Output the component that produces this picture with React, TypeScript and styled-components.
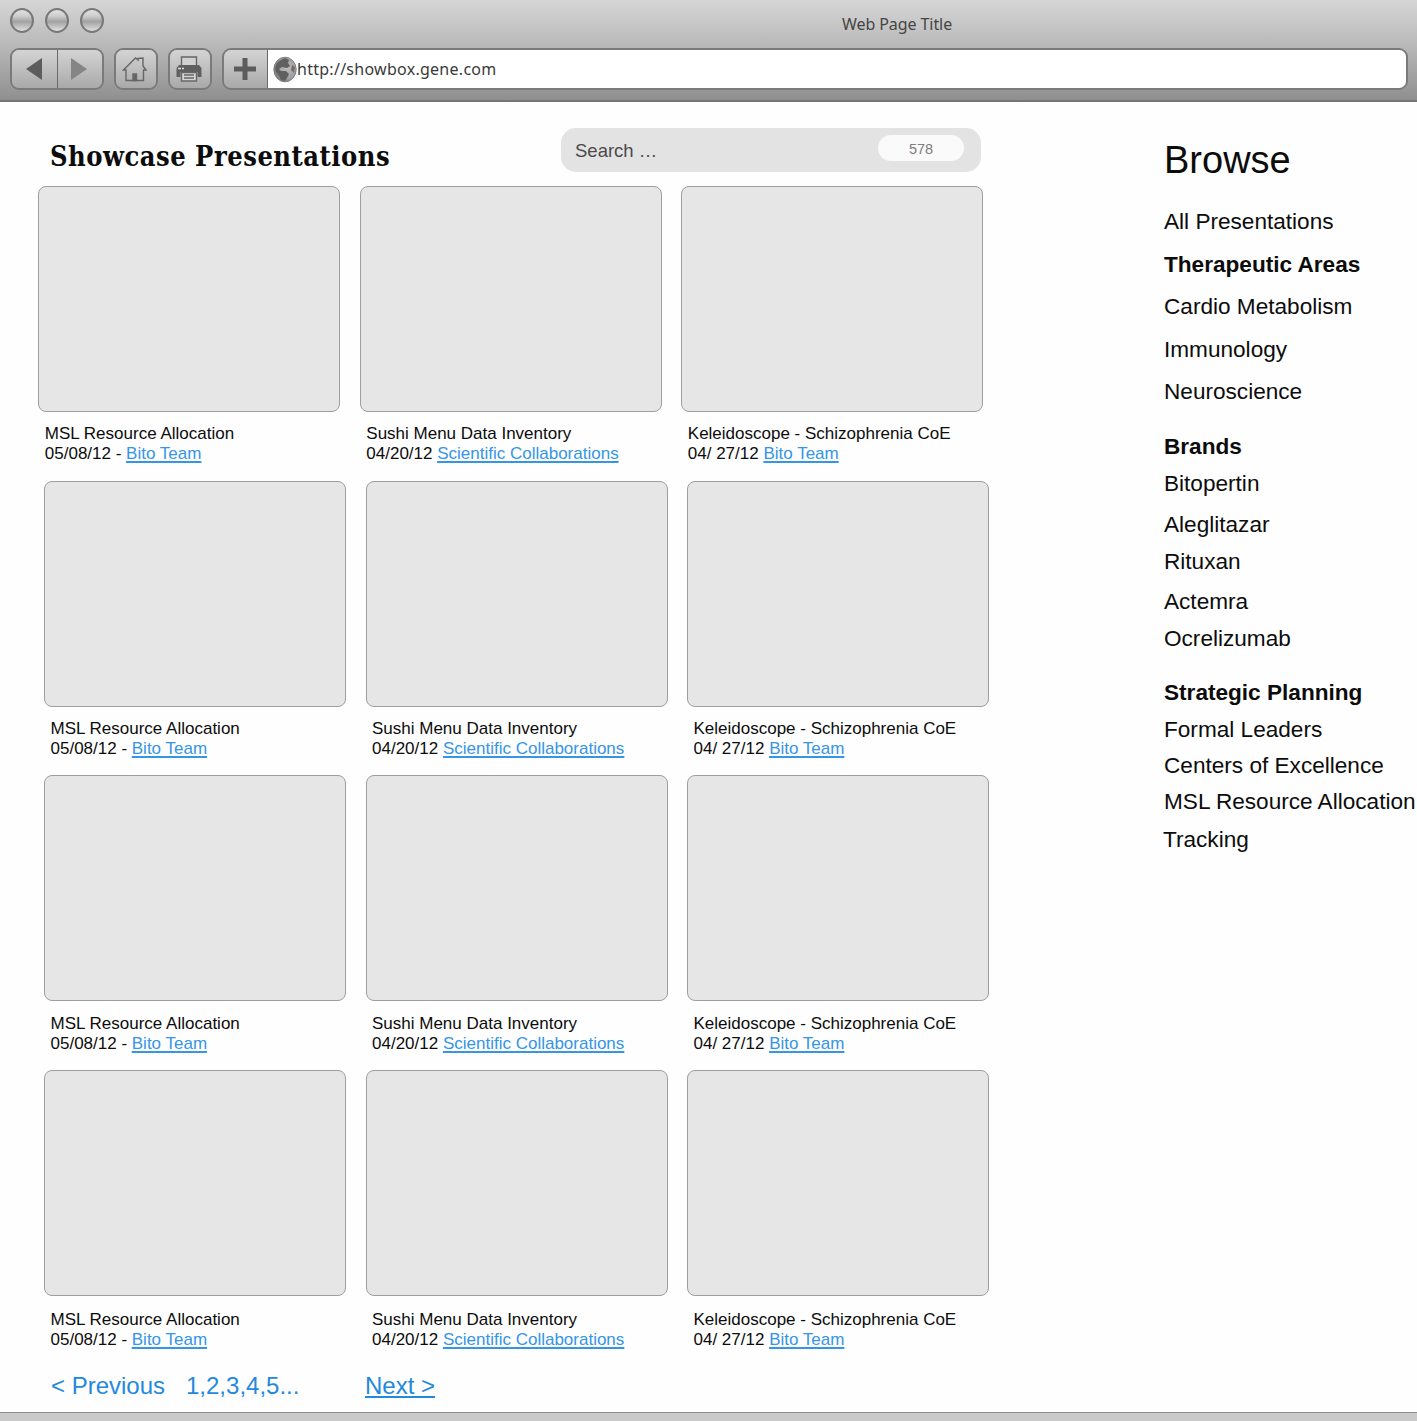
import React from "react";
import styled, { createGlobalStyle } from "styled-components";

const GlobalStyle = createGlobalStyle`
  * { box-sizing: border-box; }
  html, body { margin: 0; padding: 0; background: #fefefe; }
  body { font-family: "Liberation Sans", Arial, sans-serif; color: #0c0c0c; overflow: hidden; }
`;

const Window = styled.div`
  width: 1417px;
  height: 1421px;
  display: flex;
  flex-direction: column;
  overflow: hidden;
`;

const Chrome = styled.header`
  height: 102px;
  flex: none;
  display: flex;
  flex-direction: column;
  background: linear-gradient(#d6d6d6 0%, #b9b9b9 45%, #8f8f8f 100%);
  border-bottom: 2px solid #757575;
`;

const TitleBar = styled.div`
  height: 48px;
  display: flex;
  align-items: flex-start;
  padding: 8px 0 0 10px;
`;

const Lights = styled.div`
  display: flex;
  gap: 11px;
  width: 832px;
`;

const Light = styled.span`
  width: 24px;
  height: 25px;
  border-radius: 50%;
  border: 2px solid #787878;
  background: linear-gradient(#e2e2e2 0%, #cccccc 30%, #a2a2a2 55%, #bcbcbc 75%, #e2e2e2 100%);
`;

const WindowTitle = styled.div`
  font: 16px/24px "Noto Sans", "Open Sans", sans-serif;
  letter-spacing: -0.08px;
  padding-top: 4px;
  color: #454545;
  white-space: nowrap;
`;

const Toolbar = styled.div`
  display: flex;
  gap: 10px;
  padding: 0 9px 0 10px;
`;

const ButtonGroup = styled.div<{ $wide?: boolean }>`
  display: flex;
  height: 42px;
  border: 2px solid #7a7a7a;
  border-radius: 9px;
  overflow: hidden;
  flex: ${(p) => (p.$wide ? "1" : "none")};
`;

const ToolButton = styled.button<{ $width: number; $divided?: boolean }>`
  width: ${(p) => p.$width}px;
  height: 38px;
  padding: 0 2px 0 0;
  border: 0;
  border-right: ${(p) => (p.$divided ? "1px solid #6a6a6a" : "0")};
  background: linear-gradient(#d4d4d4, #a9a9a9);
  display: flex;
  align-items: center;
  justify-content: center;
`;

const Address = styled.div`
  flex: 1;
  display: flex;
  align-items: center;
  padding-left: 5px;
  background: #fff;
  color: #3a3a3a;
  font: 16px/24px "Noto Sans", "Open Sans", sans-serif;
  letter-spacing: 0.27px;
  white-space: nowrap;
`;

const Page = styled.main`
  height: 1310px;
  flex: none;
  display: flex;
  background: #fefefe;
`;

const Content = styled.section`
  width: 1164px;
  flex: none;
`;

const PageHead = styled.div`
  height: 84px;
  display: flex;
  align-items: flex-start;
  padding: 26px 0 0 50px;
`;

const Heading = styled.h1`
  width: 511px;
  margin: 12px 0 0;
  font: bold 27px/34px "DejaVu Serif Condensed", "DejaVu Serif", serif;
  font-stretch: condensed;
  letter-spacing: 0.52px;
  white-space: nowrap;
`;

const Search = styled.div`
  width: 420px;
  height: 44px;
  display: flex;
  align-items: flex-start;
  justify-content: space-between;
  padding: 7px 17px 0 14px;
  border-radius: 15px;
  background: #e3e3e3;
  color: #4b4b4b;
  font-size: 18.5px;
  line-height: 32px;
`;

const Count = styled.span`
  width: 86px;
  height: 26px;
  border-radius: 13px;
  background: #fafafa;
  color: #7d7d7d;
  text-align: center;
  font-size: 14.5px;
  line-height: 29px;
`;

const CardRow = styled.div<{ $indent: number; $height: number }>`
  display: grid;
  grid-template-columns: repeat(3, 302px);
  column-gap: 19.5px;
  height: ${(p) => p.$height}px;
  padding-left: ${(p) => p.$indent}px;
`;

const Thumb = styled.div`
  height: 226px;
  border: 1px solid #9e9e9e;
  border-radius: 8px;
  background: #e6e6e6;
`;

const Caption = styled.div<{ $top: number }>`
  padding: ${(p) => p.$top}px 0 0 6.5px;
  font-size: 17px;
  line-height: 20px;
  white-space: nowrap;
`;

const TeamLink = styled.a`
  color: #3595e6;
  text-decoration: underline;
  text-decoration-thickness: 1.5px;
  text-underline-offset: 2px;
`;

const Pager = styled.nav`
  display: flex;
  padding: 1px 0 0 51px;
  color: #2489dc;
  font-size: 24px;
  line-height: 30px;
  white-space: nowrap;
`;

const PagerItem = styled.span<{ $width: number; $linked?: boolean }>`
  width: ${(p) => p.$width}px;
  text-decoration: ${(p) => (p.$linked ? "underline" : "none")};
  text-decoration-thickness: 1.5px;
  text-underline-offset: 2px;
`;

const Sidebar = styled.aside`
  flex: 1;
  padding-top: 36px;
  white-space: nowrap;
`;

const BrowseTitle = styled.h2`
  margin: 0;
  font-size: 38px;
  line-height: 44px;
  font-weight: normal;
`;

const BrowseItem = styled.div<{ $gap: number; $bold?: boolean; $outdent?: boolean }>`
  margin-top: ${(p) => p.$gap}px;
  margin-left: ${(p) => (p.$outdent ? "-1px" : "0")};
  font-size: 22.6px;
  line-height: 26px;
  font-weight: ${(p) => (p.$bold ? "bold" : "normal")};
`;

const StatusBar = styled.footer`
  flex: 1;
  border-top: 1.5px solid #8c8c8c;
  background: #cacaca;
`;

const presentations = [
  { title: "MSL Resource Allocation", date: "05/08/12 - ", team: "Bito Team" },
  { title: "Sushi Menu Data Inventory", date: "04/20/12 ", team: "Scientific Collaborations" },
  { title: "Keleidoscope - Schizophrenia CoE", date: "04/ 27/12 ", team: "Bito Team" },
];

const rows = [
  { indent: 38.3, height: 295, captionTop: 12 },
  { indent: 44, height: 294.4, captionTop: 12 },
  { indent: 44, height: 295, captionTop: 12.2 },
  { indent: 44, height: 299.6, captionTop: 13.2 },
];

const browseItems = [
  { label: "All Presentations", gap: 27 },
  { label: "Therapeutic Areas", gap: 17, bold: true },
  { label: "Cardio Metabolism", gap: 16 },
  { label: "Immunology", gap: 17 },
  { label: "Neuroscience", gap: 16 },
  { label: "Brands", gap: 29, bold: true },
  { label: "Bitopertin", gap: 11 },
  { label: "Aleglitazar", gap: 15 },
  { label: "Rituxan", gap: 11 },
  { label: "Actemra", gap: 14 },
  { label: "Ocrelizumab", gap: 11 },
  { label: "Strategic Planning", gap: 28, bold: true },
  { label: "Formal Leaders", gap: 11 },
  { label: "Centers of Excellence", gap: 10 },
  { label: "MSL Resource Allocation", gap: 10 },
  { label: "Tracking", gap: 12, outdent: true },
];

const HomeIcon = () => (
  <svg width="26" height="28" viewBox="0 0 26 28" fill="none" stroke="#666" strokeWidth="1.4">
    <path d="M4 25.500V15H1.500L13.500 3l2.500 2V3.500l5-.500v8l3 4h-2.500v10.500z" />
    <path d="M11 19h3.500v6.500H11z" fill="#666" />
  </svg>
);

const PrinterIcon = () => (
  <svg width="28" height="28" viewBox="0 0 28 28">
    <path d="M6.5 11V2h15v9" fill="#d0d0d0" stroke="#666" strokeWidth="1.4" />
    <path d="M4 10h20l2.5 3v9h-4v-5h-17v5h-4v-9z" fill="#606060" />
    <path d="M3 13.5h3M7 13.5h2" stroke="#ddd" strokeWidth="1.5" />
    <path d="M6.5 17.5h15V26h-15z" fill="#d5d5d5" stroke="#666" strokeWidth="1.4" />
    <path d="M9 20h10M9 23h10" stroke="#666" strokeWidth="1.4" />
  </svg>
);

const GlobeIcon = () => (
  <svg width="24" height="27" viewBox="0 0 24 27">
    <defs>
      <radialGradient id="globe" cx=".6" cy=".45" r=".6">
        <stop offset="0" stopColor="#bcbcbc" />
        <stop offset=".7" stopColor="#a0a0a0" />
        <stop offset="1" stopColor="#787878" />
      </radialGradient>
    </defs>
    <ellipse cx="12" cy="13.5" rx="11.2" ry="12.3" fill="url(#globe)" stroke="#808080" />
    <path d="M8 4l4-2 4 2-1 3 2 3-3 2-5-1-3 2 2 2 5 0 3 3-2 4-2 3-4-1-2-4-3-4-1-4 2-5z" fill="#606060" />
    <path d="M19 9l3 2-1 6-3-3z" fill="#707070" />
  </svg>
);

export default function App() {
  return (
    <>
      <GlobalStyle />
      <Window>
        <Chrome>
          <TitleBar>
            <Lights>
              <Light />
              <Light />
              <Light />
            </Lights>
            <WindowTitle>Web Page Title</WindowTitle>
          </TitleBar>
          <Toolbar>
            <ButtonGroup>
              <ToolButton $width={46} $divided aria-label="Back">
                <svg width="18" height="24" viewBox="0 0 18 24">
                  <path d="M17 1v22L1 12z" fill="#5c5c5c" />
                </svg>
              </ToolButton>
              <ToolButton $width={44} aria-label="Forward">
                <svg width="18" height="24" viewBox="0 0 18 24">
                  <path d="M1 1v22l16-11z" fill="#858585" />
                </svg>
              </ToolButton>
            </ButtonGroup>
            <ButtonGroup>
              <ToolButton $width={40} aria-label="Home">
                <HomeIcon />
              </ToolButton>
            </ButtonGroup>
            <ButtonGroup>
              <ToolButton $width={40} aria-label="Print">
                <PrinterIcon />
              </ToolButton>
            </ButtonGroup>
            <ButtonGroup $wide>
              <ToolButton $width={44} $divided aria-label="Add">
                <svg width="22" height="24" viewBox="0 0 22 24">
                  <path d="M11 1v22M0 12h22" stroke="#5c5c5c" strokeWidth="5" />
                </svg>
              </ToolButton>
              <Address>
                <GlobeIcon />
                http://showbox.gene.com
              </Address>
            </ButtonGroup>
          </Toolbar>
        </Chrome>

        <Page>
          <Content>
            <PageHead>
              <Heading>Showcase Presentations</Heading>
              <Search>
                <span>Search …</span>
                <Count>578</Count>
              </Search>
            </PageHead>
            {rows.map((row, i) => (
              <CardRow key={i} $indent={row.indent} $height={row.height}>
                {presentations.map((p) => (
                  <div key={p.title}>
                    <Thumb />
                    <Caption $top={row.captionTop}>
                      {p.title}
                      <br />
                      {p.date}
                      <TeamLink>{p.team}</TeamLink>
                    </Caption>
                  </div>
                ))}
              </CardRow>
            ))}
            <Pager>
              <PagerItem $width={135}>&lt; Previous</PagerItem>
              <PagerItem $width={179}>1,2,3,4,5...</PagerItem>
              <PagerItem $width={71} $linked>Next &gt;</PagerItem>
            </Pager>
          </Content>
          <Sidebar>
            <BrowseTitle>Browse</BrowseTitle>
            {browseItems.map((item) => (
              <BrowseItem
                key={item.label}
                $gap={item.gap}
                $bold={item.bold}
                $outdent={item.outdent}
              >
                {item.label}
              </BrowseItem>
            ))}
          </Sidebar>
        </Page>
        <StatusBar />
      </Window>
    </>
  );
}
